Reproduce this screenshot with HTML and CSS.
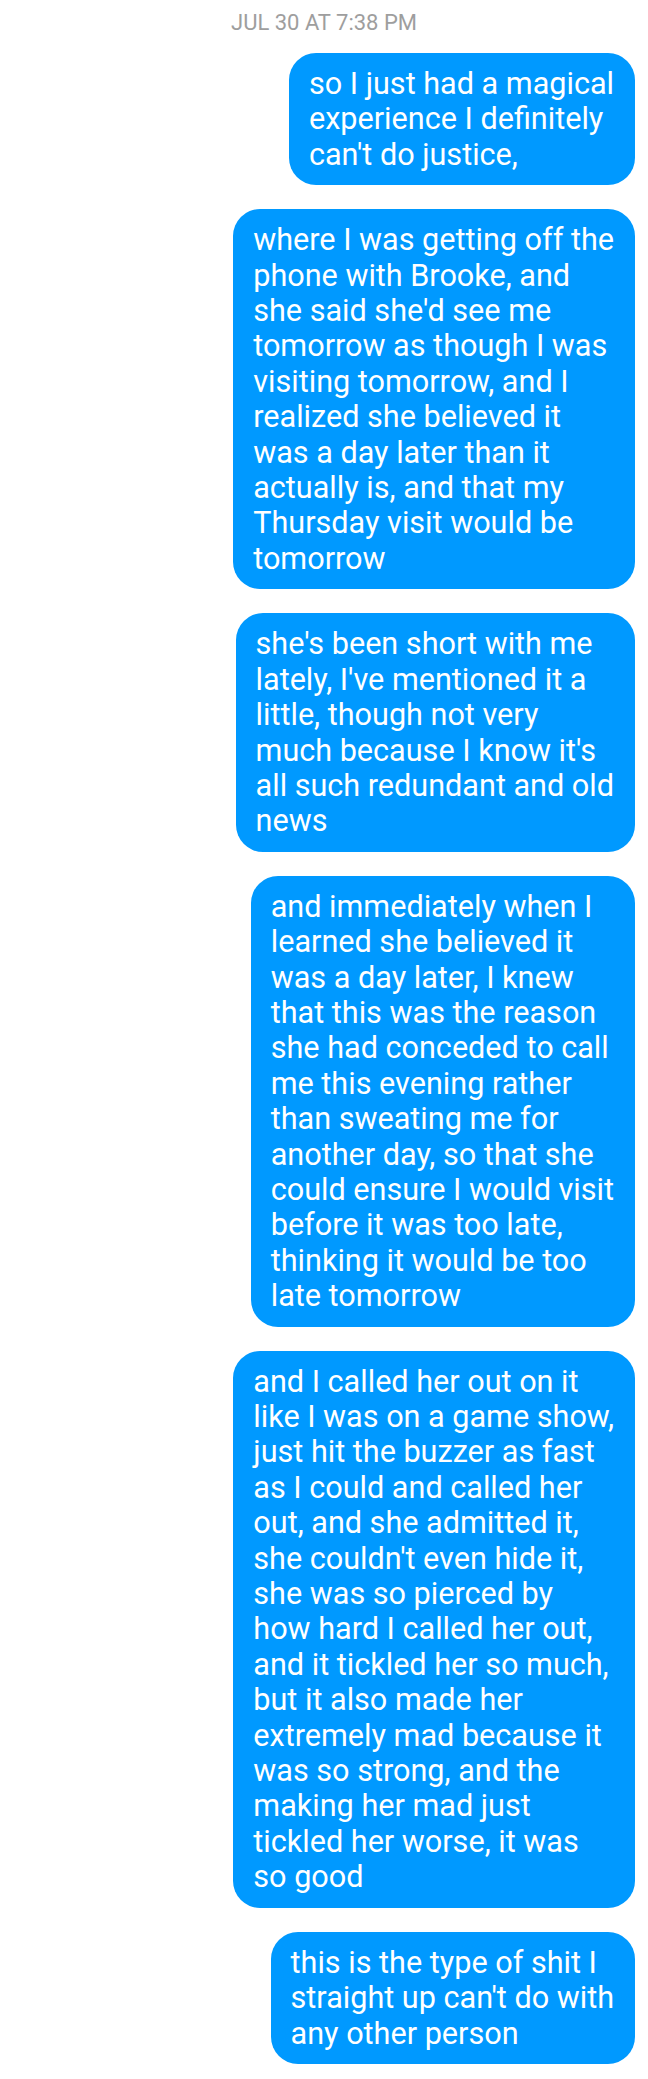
FILE: index.html
```html
<!DOCTYPE html>
<html lang="en">
<head>
<meta charset="utf-8">
<title>Messages</title>
<link rel="stylesheet" href="styles.css">
</head>
<body>
<main class="thread">
  <div class="stamp">JUL 30 AT 7:38 PM</div>
  <div class="bubble">so I just had a magical<br>experience I definitely<br>can't do justice,</div>
  <div class="bubble">where I was getting off the<br>phone with Brooke, and<br>she said she'd see me<br>tomorrow as though I was<br>visiting tomorrow, and I<br>realized she believed it<br>was a day later than it<br>actually is, and that my<br>Thursday visit would be<br>tomorrow</div>
  <div class="bubble">she's been short with me<br>lately, I've mentioned it a<br>little, though not very<br>much because I know it's<br>all such redundant and old<br>news</div>
  <div class="bubble">and immediately when I<br>learned she believed it<br>was a day later, I knew<br>that this was the reason<br>she had conceded to call<br>me this evening rather<br>than sweating me for<br>another day, so that she<br>could ensure I would visit<br>before it was too late,<br>thinking it would be too<br>late tomorrow</div>
  <div class="bubble">and I called her out on it<br>like I was on a game show,<br>just hit the buzzer as fast<br>as I could and called her<br>out, and she admitted it,<br>she couldn't even hide it,<br>she was so pierced by<br>how hard I called her out,<br>and it tickled her so much,<br>but it also made her<br>extremely mad because it<br>was so strong, and the<br>making her mad just<br>tickled her worse, it was<br>so good</div>
  <div class="bubble">this is the type of shit I<br>straight up can't do with<br>any other person</div>
</main>
</body>
</html>
```

FILE: styles.css
```css
html, body {
  margin: 0;
  padding: 0;
  background: #ffffff;
}

body {
  font-family: Roboto, "Noto Sans", "Liberation Sans", sans-serif;
}

.thread {
  display: flex;
  flex-direction: column;
  align-items: flex-end;
  gap: 24px;
  padding: 10px 13px 16px 13px;
}

.stamp {
  align-self: stretch;
  text-align: center;
  font-size: 22px;
  line-height: 26px;
  color: #9e9e9e;
  margin-bottom: -7px;
}

.bubble {
  background: #0099ff;
  color: #ffffff;
  font-size: 30.6px;
  line-height: 35.4px;
  padding: 13px 21px 13px 20px;
  border-radius: 27px;
  white-space: nowrap;
}
```
